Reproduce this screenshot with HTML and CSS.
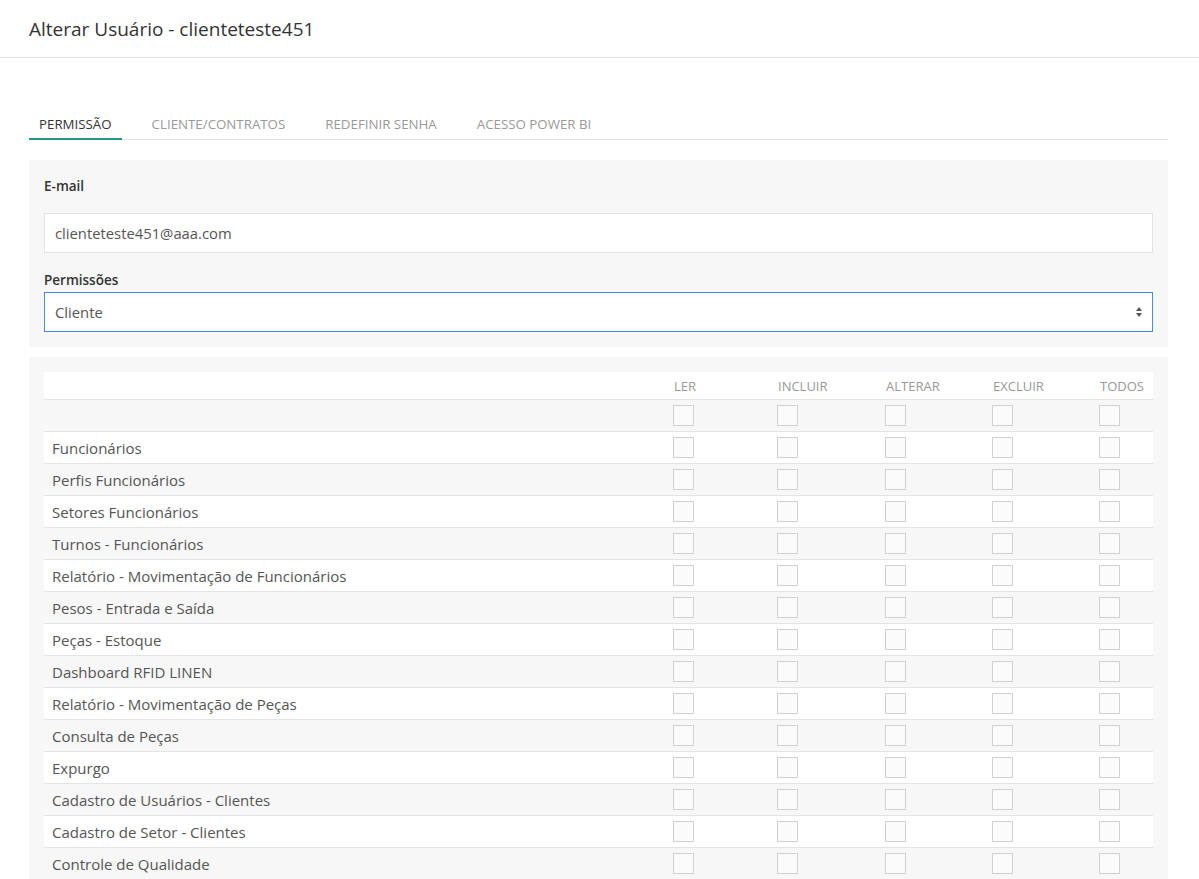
FILE: index.html
```html
<!DOCTYPE html>
<html lang="pt-BR">
<head>
<meta charset="utf-8">
<title>Alterar Usuário</title>
<link rel="stylesheet" href="styles.css">
</head>
<body>
<header class="page-header">
  <h1 class="page-title">Alterar Usuário - clienteteste451</h1>
</header>
<main class="content">
  <nav class="tabs">
    <a class="tab active">PERMISSÃO</a>
    <a class="tab">CLIENTE/CONTRATOS</a>
    <a class="tab">REDEFINIR SENHA</a>
    <a class="tab">ACESSO POWER BI</a>
  </nav>

  <section class="panel form-panel">
    <label class="field-label email-label">E-mail</label>
    <input class="text-input" type="text" value="clienteteste451@aaa.com">
    <label class="field-label perm-label">Permissões</label>
    <div class="select-wrap">
      <select class="select-input">
        <option>Cliente</option>
      </select>
      <svg class="select-arrow" width="8" height="12" viewBox="0 0 8 12"><path d="M4 1 L7 5 L1 5 Z M4 11 L7 7 L1 7 Z" fill="#555"/></svg>
    </div>
  </section>

  <section class="panel table-panel">
    <div class="perm-table">
      <div class="row head">
        <div class="cell name"></div>
        <div class="cell">LER</div>
        <div class="cell">INCLUIR</div>
        <div class="cell">ALTERAR</div>
        <div class="cell">EXCLUIR</div>
        <div class="cell">TODOS</div>
      </div>
      <div class="row striped">
        <div class="cell name"></div>
        <div class="cell"><input class="cb" type="checkbox"></div>
        <div class="cell"><input class="cb" type="checkbox"></div>
        <div class="cell"><input class="cb" type="checkbox"></div>
        <div class="cell"><input class="cb" type="checkbox"></div>
        <div class="cell"><input class="cb" type="checkbox"></div>
      </div>
      <div class="row">
        <div class="cell name">Funcionários</div>
        <div class="cell"><input class="cb" type="checkbox"></div>
        <div class="cell"><input class="cb" type="checkbox"></div>
        <div class="cell"><input class="cb" type="checkbox"></div>
        <div class="cell"><input class="cb" type="checkbox"></div>
        <div class="cell"><input class="cb" type="checkbox"></div>
      </div>
      <div class="row striped">
        <div class="cell name">Perfis Funcionários</div>
        <div class="cell"><input class="cb" type="checkbox"></div>
        <div class="cell"><input class="cb" type="checkbox"></div>
        <div class="cell"><input class="cb" type="checkbox"></div>
        <div class="cell"><input class="cb" type="checkbox"></div>
        <div class="cell"><input class="cb" type="checkbox"></div>
      </div>
      <div class="row">
        <div class="cell name">Setores Funcionários</div>
        <div class="cell"><input class="cb" type="checkbox"></div>
        <div class="cell"><input class="cb" type="checkbox"></div>
        <div class="cell"><input class="cb" type="checkbox"></div>
        <div class="cell"><input class="cb" type="checkbox"></div>
        <div class="cell"><input class="cb" type="checkbox"></div>
      </div>
      <div class="row striped">
        <div class="cell name">Turnos - Funcionários</div>
        <div class="cell"><input class="cb" type="checkbox"></div>
        <div class="cell"><input class="cb" type="checkbox"></div>
        <div class="cell"><input class="cb" type="checkbox"></div>
        <div class="cell"><input class="cb" type="checkbox"></div>
        <div class="cell"><input class="cb" type="checkbox"></div>
      </div>
      <div class="row">
        <div class="cell name">Relatório - Movimentação de Funcionários</div>
        <div class="cell"><input class="cb" type="checkbox"></div>
        <div class="cell"><input class="cb" type="checkbox"></div>
        <div class="cell"><input class="cb" type="checkbox"></div>
        <div class="cell"><input class="cb" type="checkbox"></div>
        <div class="cell"><input class="cb" type="checkbox"></div>
      </div>
      <div class="row striped">
        <div class="cell name">Pesos - Entrada e Saída</div>
        <div class="cell"><input class="cb" type="checkbox"></div>
        <div class="cell"><input class="cb" type="checkbox"></div>
        <div class="cell"><input class="cb" type="checkbox"></div>
        <div class="cell"><input class="cb" type="checkbox"></div>
        <div class="cell"><input class="cb" type="checkbox"></div>
      </div>
      <div class="row">
        <div class="cell name">Peças - Estoque</div>
        <div class="cell"><input class="cb" type="checkbox"></div>
        <div class="cell"><input class="cb" type="checkbox"></div>
        <div class="cell"><input class="cb" type="checkbox"></div>
        <div class="cell"><input class="cb" type="checkbox"></div>
        <div class="cell"><input class="cb" type="checkbox"></div>
      </div>
      <div class="row striped">
        <div class="cell name">Dashboard RFID LINEN</div>
        <div class="cell"><input class="cb" type="checkbox"></div>
        <div class="cell"><input class="cb" type="checkbox"></div>
        <div class="cell"><input class="cb" type="checkbox"></div>
        <div class="cell"><input class="cb" type="checkbox"></div>
        <div class="cell"><input class="cb" type="checkbox"></div>
      </div>
      <div class="row">
        <div class="cell name">Relatório - Movimentação de Peças</div>
        <div class="cell"><input class="cb" type="checkbox"></div>
        <div class="cell"><input class="cb" type="checkbox"></div>
        <div class="cell"><input class="cb" type="checkbox"></div>
        <div class="cell"><input class="cb" type="checkbox"></div>
        <div class="cell"><input class="cb" type="checkbox"></div>
      </div>
      <div class="row striped">
        <div class="cell name">Consulta de Peças</div>
        <div class="cell"><input class="cb" type="checkbox"></div>
        <div class="cell"><input class="cb" type="checkbox"></div>
        <div class="cell"><input class="cb" type="checkbox"></div>
        <div class="cell"><input class="cb" type="checkbox"></div>
        <div class="cell"><input class="cb" type="checkbox"></div>
      </div>
      <div class="row">
        <div class="cell name">Expurgo</div>
        <div class="cell"><input class="cb" type="checkbox"></div>
        <div class="cell"><input class="cb" type="checkbox"></div>
        <div class="cell"><input class="cb" type="checkbox"></div>
        <div class="cell"><input class="cb" type="checkbox"></div>
        <div class="cell"><input class="cb" type="checkbox"></div>
      </div>
      <div class="row striped">
        <div class="cell name">Cadastro de Usuários - Clientes</div>
        <div class="cell"><input class="cb" type="checkbox"></div>
        <div class="cell"><input class="cb" type="checkbox"></div>
        <div class="cell"><input class="cb" type="checkbox"></div>
        <div class="cell"><input class="cb" type="checkbox"></div>
        <div class="cell"><input class="cb" type="checkbox"></div>
      </div>
      <div class="row">
        <div class="cell name">Cadastro de Setor - Clientes</div>
        <div class="cell"><input class="cb" type="checkbox"></div>
        <div class="cell"><input class="cb" type="checkbox"></div>
        <div class="cell"><input class="cb" type="checkbox"></div>
        <div class="cell"><input class="cb" type="checkbox"></div>
        <div class="cell"><input class="cb" type="checkbox"></div>
      </div>
      <div class="row striped">
        <div class="cell name">Controle de Qualidade</div>
        <div class="cell"><input class="cb" type="checkbox"></div>
        <div class="cell"><input class="cb" type="checkbox"></div>
        <div class="cell"><input class="cb" type="checkbox"></div>
        <div class="cell"><input class="cb" type="checkbox"></div>
        <div class="cell"><input class="cb" type="checkbox"></div>
      </div>
    </div>
  </section>
</main>
</body>
</html>
```

FILE: styles.css
```css
* { box-sizing: border-box; }

body {
  margin: 0;
  background: #fff;
  font-family: "Open Sans", "Noto Sans", sans-serif;
  color: #555;
}

.page-header {
  height: 58px;
  padding: 0 29px;
  display: flex;
  align-items: center;
  border-bottom: 1px solid #e5e5e5;
}

.page-title {
  margin: 0;
  font-size: 19px;
  font-weight: 400;
  color: #333;
}

.content {
  padding: 42px 31px 0 29px;
}

.tabs {
  display: flex;
  gap: 20px;
  border-bottom: 1px solid #e2e2e2;
}

.tab {
  padding: 14px 10px 3px;
  font-size: 13.3px;
  line-height: 21px;
  color: #999;
  border-bottom: 2px solid transparent;
  margin-bottom: -1px;
}

.tab.active {
  color: #333;
  border-bottom-color: #23968c;
}

.panel {
  background: #f7f7f7;
  padding: 15px;
}

.form-panel {
  margin-top: 20px;
  display: flex;
  flex-direction: column;
}

.field-label {
  font-size: 13.5px;
  font-weight: 600;
  color: #333;
  line-height: 22px;
}

.email-label { margin-bottom: 16px; }
.perm-label { margin-top: 16px; margin-bottom: 1px; }

.text-input,
.select-input {
  width: 100%;
  height: 40px;
  padding: 0 10px;
  font-family: inherit;
  font-size: 14.8px;
  color: #555;
  background: #fff;
  border: 1px solid #e3e3e3;
  border-radius: 0;
  outline: none;
}

.select-wrap {
  position: relative;
}

.select-input {
  appearance: none;
  -webkit-appearance: none;
  border-color: #4a8ae0;
}

.select-arrow {
  position: absolute;
  right: 10px;
  top: 14px;
}

.table-panel {
  margin-top: 10px;
}

.perm-table {
  display: flex;
  flex-direction: column;
}

.row {
  display: grid;
  grid-template-columns: 622px 104px 108px 107px 107px 61px;
  height: 32px;
  border-bottom: 1px solid #e4e4e4;
  background: #fff;
  align-items: center;
}

.row.head {
  height: 28px;
  font-size: 13px;
  color: #999;
  padding-top: 1px;
}

.row.striped {
  background: #f7f7f7;
}

.cell {
  padding: 0 8px;
  display: flex;
  align-items: center;
}

.cell.name {
  font-size: 15px;
  color: #555;
}

.cb {
  appearance: none;
  -webkit-appearance: none;
  margin: 0 0 0 -1px;
  width: 21px;
  height: 21px;
  border: 1px solid #d3d1cc;
  background: #fbfbfb;
  border-radius: 0;
}
```
